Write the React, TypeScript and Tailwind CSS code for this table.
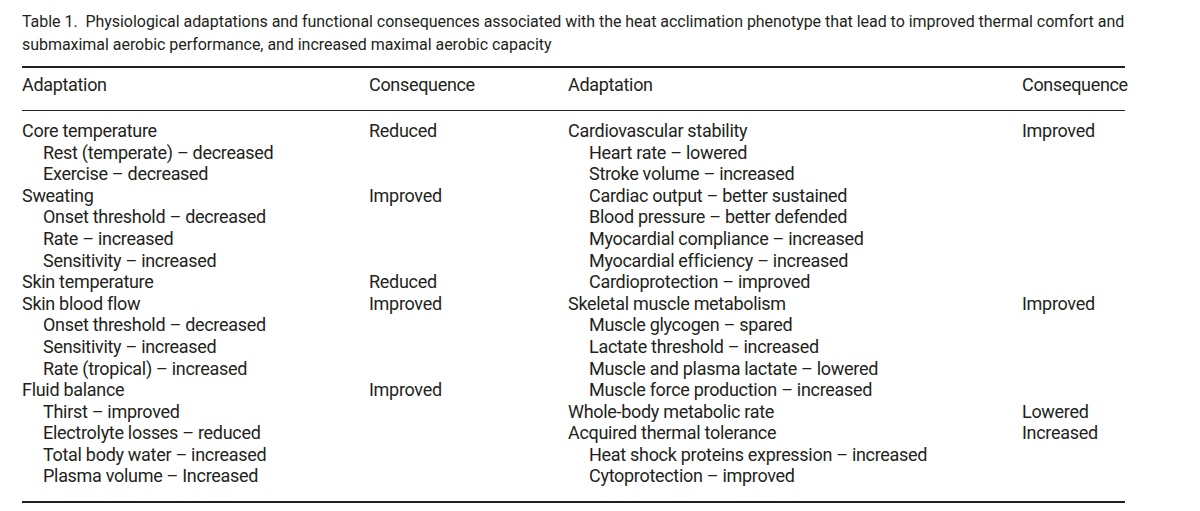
type Line = { text: string; indent?: boolean }

type Row = {
  left: Line
  leftResult?: string
  right: Line
  rightResult?: string
}

const rows: Row[] = [
  {
    left: { text: 'Core temperature' },
    leftResult: 'Reduced',
    right: { text: 'Cardiovascular stability' },
    rightResult: 'Improved',
  },
  {
    left: { text: 'Rest (temperate) – decreased', indent: true },
    right: { text: 'Heart rate – lowered', indent: true },
  },
  {
    left: { text: 'Exercise – decreased', indent: true },
    right: { text: 'Stroke volume – increased', indent: true },
  },
  {
    left: { text: 'Sweating' },
    leftResult: 'Improved',
    right: { text: 'Cardiac output – better sustained', indent: true },
  },
  {
    left: { text: 'Onset threshold – decreased', indent: true },
    right: { text: 'Blood pressure – better defended', indent: true },
  },
  {
    left: { text: 'Rate – increased', indent: true },
    right: { text: 'Myocardial compliance – increased', indent: true },
  },
  {
    left: { text: 'Sensitivity – increased', indent: true },
    right: { text: 'Myocardial efficiency – increased', indent: true },
  },
  {
    left: { text: 'Skin temperature' },
    leftResult: 'Reduced',
    right: { text: 'Cardioprotection – improved', indent: true },
  },
  {
    left: { text: 'Skin blood flow' },
    leftResult: 'Improved',
    right: { text: 'Skeletal muscle metabolism' },
    rightResult: 'Improved',
  },
  {
    left: { text: 'Onset threshold – decreased', indent: true },
    right: { text: 'Muscle glycogen – spared', indent: true },
  },
  {
    left: { text: 'Sensitivity – increased', indent: true },
    right: { text: 'Lactate threshold – increased', indent: true },
  },
  {
    left: { text: 'Rate (tropical) – increased', indent: true },
    right: { text: 'Muscle and plasma lactate – lowered', indent: true },
  },
  {
    left: { text: 'Fluid balance' },
    leftResult: 'Improved',
    right: { text: 'Muscle force production – increased', indent: true },
  },
  {
    left: { text: 'Thirst – improved', indent: true },
    right: { text: 'Whole-body metabolic rate' },
    rightResult: 'Lowered',
  },
  {
    left: { text: 'Electrolyte losses – reduced', indent: true },
    right: { text: 'Acquired thermal tolerance' },
    rightResult: 'Increased',
  },
  {
    left: { text: 'Total body water – increased', indent: true },
    right: { text: 'Heat shock proteins expression – increased', indent: true },
  },
  {
    left: { text: 'Plasma volume – Increased', indent: true },
    right: { text: 'Cytoprotection – improved', indent: true },
  },
]

const cols = 'grid grid-cols-[347px_199px_454px_103px] whitespace-nowrap'

const Cell = ({ line }: { line: Line }) => (
  <div className={line.indent ? 'pl-[21px]' : ''}>{line.text}</div>
)

export default function App() {
  return (
    <div className="h-[511px] w-[1200px] overflow-hidden bg-white font-['Roboto',sans-serif] text-[#231f20]">
      <div className="ml-[22px] w-[1103px] pt-[9.5px]">
        <div className="text-[16px] leading-[23px] tracking-[-0.04px] whitespace-nowrap">
          <p>
            Table 1.&nbsp;&nbsp;Physiological adaptations and functional
            consequences associated with the heat acclimation phenotype that
            lead to improved thermal comfort and
          </p>
          <p>
            submaximal aerobic performance, and increased maximal aerobic
            capacity
          </p>
        </div>

        <div className="mt-[10.5px] border-t-2 border-[#231f20]" />

        <div className={`${cols} pt-[6px] pb-[14.4px] text-[18px] leading-[21.6px] tracking-[-0.32px]`}>
          <div>Adaptation</div>
          <div>Consequence</div>
          <div>Adaptation</div>
          <div>Consequence</div>
        </div>

        <div className="border-t border-[#231f20]" />

        <div className="pt-[9px] pb-[14px] text-[18px] leading-[21.6px] tracking-[-0.3px]">
          {rows.map((r, i) => (
            <div key={i} className={cols}>
              <Cell line={r.left} />
              <div>{r.leftResult}</div>
              <Cell line={r.right} />
              <div>{r.rightResult}</div>
            </div>
          ))}
        </div>

        <div className="border-t-2 border-[#231f20]" />
      </div>
    </div>
  )
}
